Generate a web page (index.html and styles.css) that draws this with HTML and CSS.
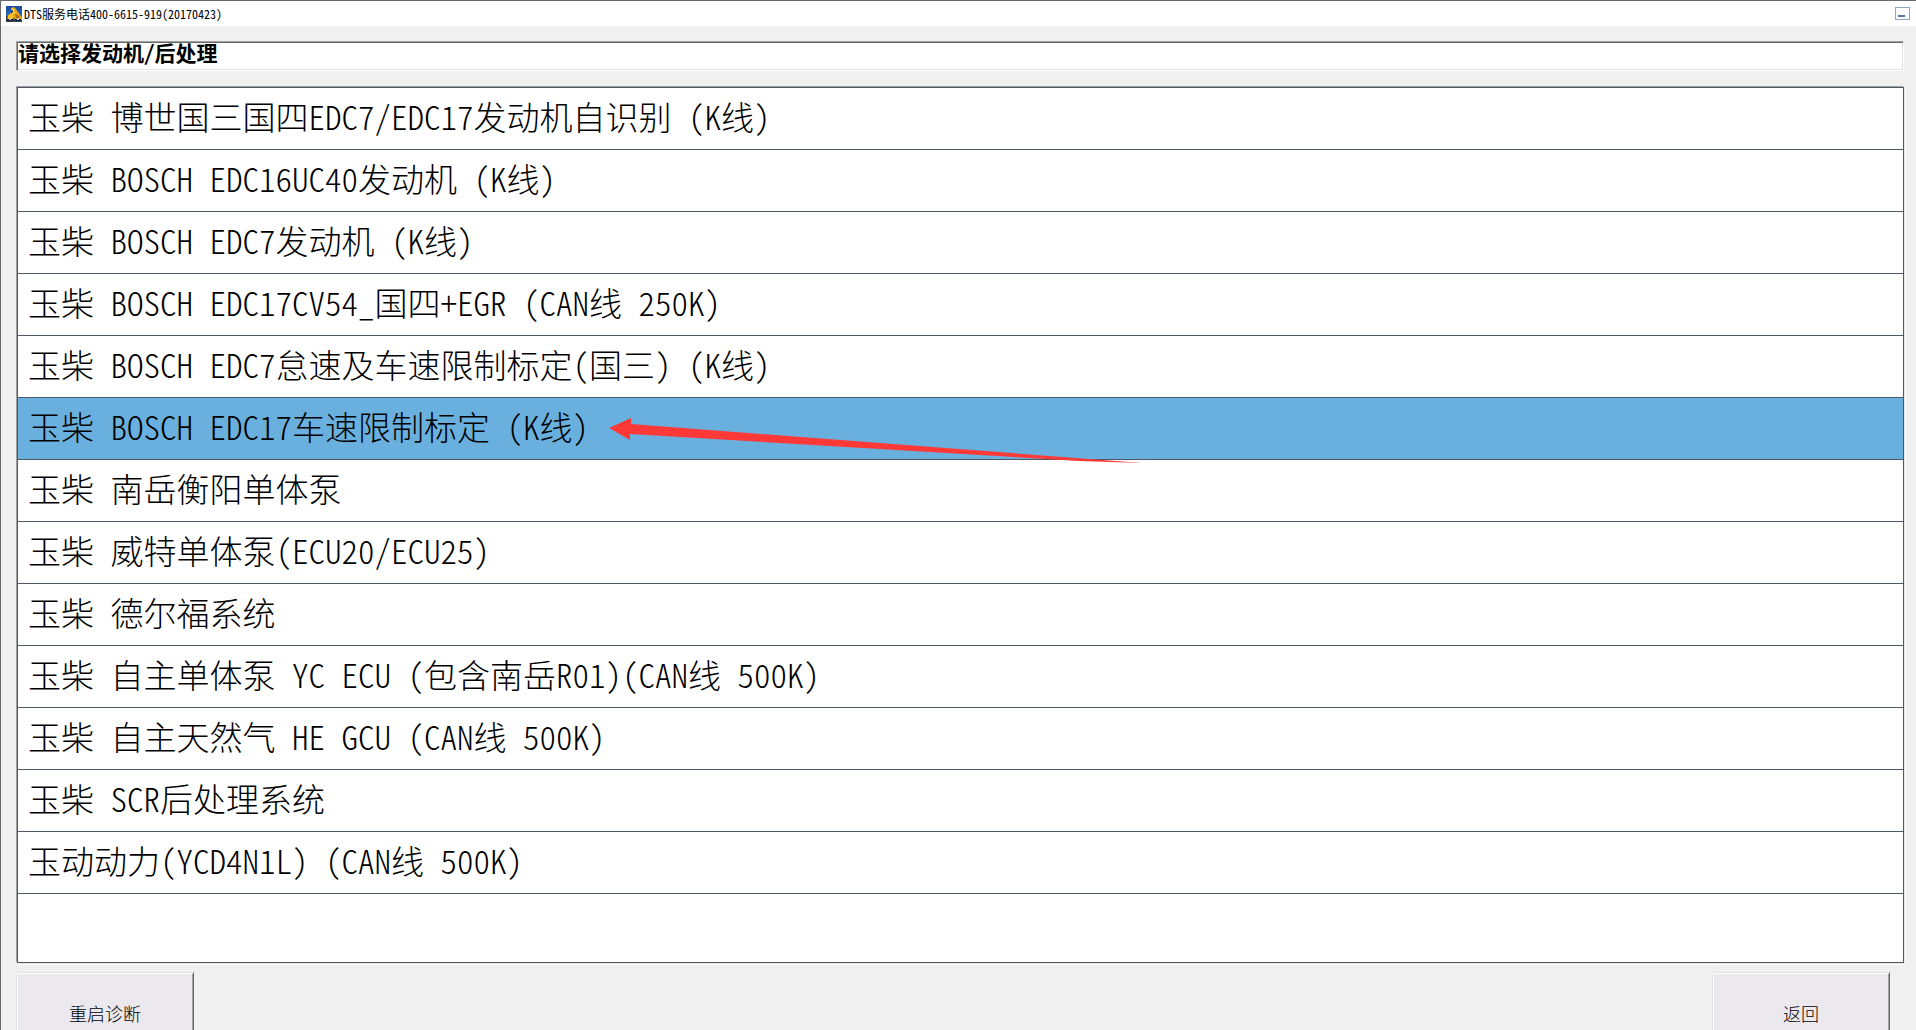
FILE: index.html
```html
<!DOCTYPE html>
<html lang="zh-CN">
<head>
  <meta charset="UTF-8" />
  <meta name="viewport" content="width=device-width, initial-scale=1" />
  <title>DTS服务电话400-6615-919(20170423)</title>
  <link rel="stylesheet" href="styles.css">
</head>
<body>

<div class="window">
  <header class="title-bar">
    <svg class="app-icon" viewBox="0 0 16 16" aria-hidden="true">
      <rect width="16" height="16" fill="#2860b8"/>
      <rect width="16" height="5" fill="#1d50a5"/>
      <path d="M0 10h16v6H0z" fill="#34404e"/>
      <path d="M5 2l3-1 2 2 4 6 2 2v3H9l-1-3-2 3H1l1-5 3-2z" fill="#e9a414"/>
      <path d="M6 2l2 1 1 4-3 1z" fill="#ffd34a"/>
      <path d="M2 10l4-2 2 2-1 3H2z" fill="#f7be25"/>
      <path d="M9 8l3 1 2 3h-4z" fill="#a76d13"/>
      <path d="M5 5l2-1v2L5 7zM1 13h6v2H1zM9 13h6v2H9z" fill="#172536"/>
      <path d="M3 12h2v2H3zM11 12h2v2h-2z" fill="#bcc3c8"/>
    </svg>
    <span class="title">DTS服务电话400-6615-919(20170423)</span>
    <button class="minimize" aria-label="最小化"></button>
  </header>

  <main class="content">
    <h1 class="prompt">请选择发动机/后处理</h1>

    <ul class="engine-list">
      <li><button>玉柴 博世国三国四EDC7/EDC17发动机自识别 (K线)</button></li>
      <li><button>玉柴 BOSCH EDC16UC40发动机 (K线)</button></li>
      <li><button>玉柴 BOSCH EDC7发动机 (K线)</button></li>
      <li><button>玉柴 BOSCH EDC17CV54_国四+EGR (CAN线 250K)</button></li>
      <li><button>玉柴 BOSCH EDC7怠速及车速限制标定(国三) (K线)</button></li>
      <li class="selected">
        <button>玉柴 BOSCH EDC17车速限制标定 (K线)</button>
        <svg class="arrow" viewBox="0 0 536 48" aria-hidden="true">
          <path d="M0 19L22 9V15L533 54L470 52L21 25V31Z" fill="#ff3838"/>
        </svg>
      </li>
      <li><button>玉柴 南岳衡阳单体泵</button></li>
      <li><button>玉柴 威特单体泵(ECU20/ECU25)</button></li>
      <li><button>玉柴 德尔福系统</button></li>
      <li><button>玉柴 自主单体泵 YC ECU (包含南岳R01)(CAN线 500K)</button></li>
      <li><button>玉柴 自主天然气 HE GCU (CAN线 500K)</button></li>
      <li><button>玉柴 SCR后处理系统</button></li>
      <li><button>玉动动力(YCD4N1L) (CAN线 500K)</button></li>
    </ul>

    <footer class="actions">
      <button class="action">重启诊断</button>
      <button class="action">返回</button>
    </footer>
  </main>
</div>

</body>
</html>
```

FILE: styles.css
```css
* {
  box-sizing: border-box;
}

body {
  margin: 0;
  height: 100vh;
  overflow: hidden;
  background: #f0f0f0;
  color: #000;
  font-family: "Noto Sans CJK SC", sans-serif;
  /* half-width latin, two letters to one hanzi */
  font-feature-settings: "hwid";
}

button {
  font: inherit;
  font-feature-settings: inherit;
  color: inherit;
  border: none;
  border-radius: 0;
  background: none;
}

.window {
  min-height: 100%;
  border-top: 1px solid #696969;
  border-left: 1px solid #696969;
}

.title-bar {
  display: flex;
  align-items: center;
  height: 25px;
  padding: 0 6px 0 5px;
  background: #fff;
}

.app-icon {
  width: 16px;
  height: 16px;
  margin-right: 2px;
}

.title {
  flex: 1;
  font-size: 12px;
  line-height: 16px;
}

.minimize {
  display: flex;
  align-items: flex-end;
  width: 15px;
  height: 13px;
  padding: 2px;
  border: 1px solid #8ba9c1;
}

.minimize::before {
  content: "";
  width: 7px;
  height: 2px;
  background: #5474a6;
}

.content {
  padding: 15px 12px 0 15px;
}

.prompt {
  margin: 0 0 16px;
  height: 30px;
  padding-left: 1px;
  border: 1px solid;
  border-color: #a0a0a0 #fff #fff #a0a0a0;
  box-shadow: inset 1px 1px #696969, inset -1px -1px #e3e3e3;
  background: #fff;
  font-size: 21px;
  line-height: 20px;
  font-weight: bold;
}

.engine-list {
  margin: 0 0 0 1px;
  padding: 0 0 68px;
  list-style: none;
  background: #fff;
  border: 1px solid #4b5a66;
  box-shadow: -1px -1px #a0a0a0, 1px 1px #e3e3e3, 2px 2px #fff;
}

.engine-list li {
  position: relative;
  height: 62px;
  border-bottom: 1px solid #4b5a66;
}

.engine-list button {
  display: block;
  width: 100%;
  height: 100%;
  padding: 0 10px 5px;
  font-size: 33px;
  font-weight: 300;
  line-height: 56px;
  text-align: left;
  white-space: pre;
}

.engine-list .selected {
  background: #6ab0de;
}

/* red pointer lying over the selected row */
.arrow {
  position: absolute;
  left: 591px;
  top: 11px;
  width: 536px;
  height: 48px;
  overflow: visible;
  z-index: 1;
  pointer-events: none;
}

.actions {
  display: flex;
  justify-content: space-between;
  padding: 9px 14px 0 0;
}

.action {
  width: 178px;
  height: 82px;
  border: 1px solid;
  border-color: #e3e3e3 #696969 #696969 #e3e3e3;
  box-shadow: inset 1px 1px #fff, inset -1px -1px #a0a0a0;
  background: #ebe8ee;
  font-size: 18px;
  font-weight: 300;
}
```
